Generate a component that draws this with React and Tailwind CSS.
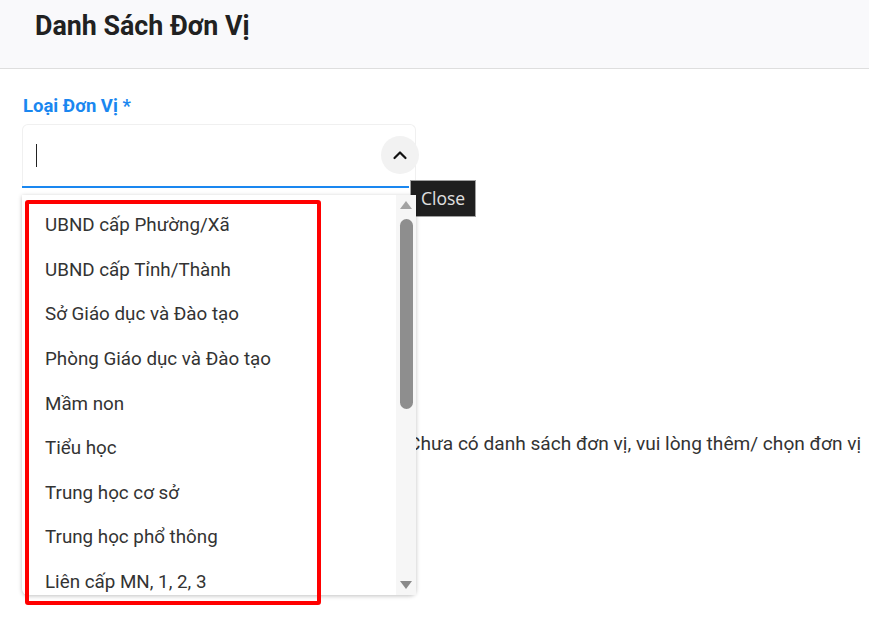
import React from "react";

const items = [
  "UBND cấp Phường/Xã",
  "UBND cấp Tỉnh/Thành",
  "Sở Giáo dục và Đào tạo",
  "Phòng Giáo dục và Đào tạo",
  "Mầm non",
  "Tiểu học",
  "Trung học cơ sở",
  "Trung học phổ thông",
  "Liên cấp MN, 1, 2, 3",
];

export default function App() {
  return (
    <div className="relative w-[869px] h-[627px] overflow-hidden bg-white font-['Roboto',sans-serif] text-[#222]">
      <header className="h-[69px] bg-[#f9f9fb] border-b border-[#dedede] flex items-center pl-[35px] pb-[16px]">
        <h1 className="text-[26.8px] font-bold text-[#212121]">Danh Sách Đơn Vị</h1>
      </header>

      <div className="pl-[23px] pt-[24px]">
        <label className="block text-[18.5px] font-bold text-[#1a87f0] leading-[26px]">Loại Đơn Vị *</label>
        <div className="relative mt-[5px] w-[394px] -ml-[1px]">
          <div className="h-[62px] rounded-t-[6px] border border-[#f0f0f0] border-b-0 flex items-center pl-[13px]">
            <span className="block w-[1px] h-[23px] bg-[#222]" />
          </div>
          <div className="w-[387px] h-[2px] bg-[#1a87f0]" />
          <button className="absolute right-[-3px] top-[12px] w-[38px] h-[38px] rounded-full bg-[#f2f2f2] flex items-center justify-center">
            <svg width="16" height="16" viewBox="0 0 16 16" fill="none">
              <path d="M2.5 11 L8 5.5 L13.5 11" stroke="#111" strokeWidth="2.2" strokeLinecap="round" strokeLinejoin="round" />
            </svg>
          </button>
        </div>
        <div className="flex items-start">
          <div className="relative z-10 mt-[7px] -ml-[1px] w-[394px] h-[400px] bg-white rounded-b-[6px] shadow-[0_1px_4px_rgba(0,0,0,0.25)] flex">
            <ul className="flex-1 pl-[23px] pt-[8px]">
              {items.map((t) => (
                <li key={t} className="h-[44.6px] flex items-center text-[18.8px] text-[#333]">{t}</li>
              ))}
            </ul>
            <div className="w-[20px] bg-[#f6f6f6] flex flex-col items-center justify-between pt-[6px] pb-[6px]">
              <svg width="12" height="8" viewBox="0 0 12 8"><path d="M6 0 L12 8 L0 8 Z" fill="#a3a3a3" /></svg>
              <div className="w-[13px] flex-1 mt-[10px] mb-[172px] rounded-full bg-[#8e8e8e]" />
              <svg width="12" height="8" viewBox="0 0 12 8"><path d="M0 0 L12 0 L6 8 Z" fill="#8a8a8a" /></svg>
            </div>
            <div className="absolute left-[3px] top-[5px] w-[296px] h-[405px] border-[4px] border-[#ff0000] rounded-[3px] pointer-events-none" />
          </div>
          <p className="mt-[242px] -ml-[8px] text-[19.1px] text-[#333]">Chưa có danh sách đơn vị, vui lòng thêm/ chọn đơn vị</p>
        </div>
      </div>

      <div className="absolute left-[410px] top-[180px] h-[37px] px-[10px] bg-[#1f1f1f] border border-[#a0a0a0] flex items-center text-[17.5px] text-[#e0e0e0] font-['Open_Sans',sans-serif]">
        Close
      </div>
    </div>
  );
}
